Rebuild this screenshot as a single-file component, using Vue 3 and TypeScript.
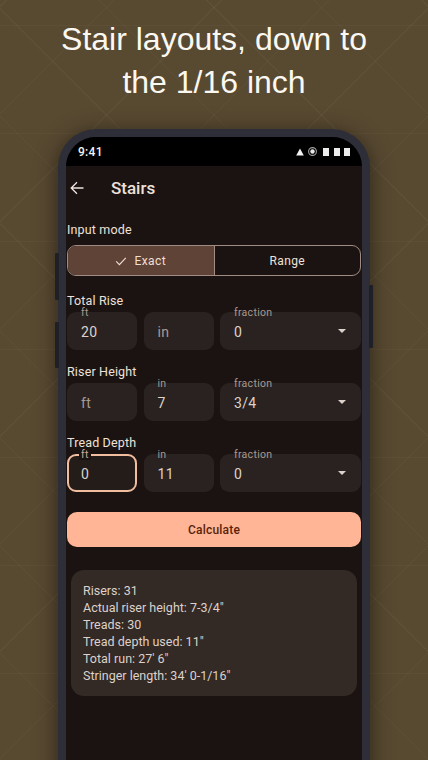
<script setup lang="ts">
interface Field { label: string; value: string; placeholder?: boolean; focused?: boolean }
interface Group { title: string; ft: Field; inch: Field; fraction: string }

const groups: Group[] = [
  { title: 'Total Rise', ft: { label: 'ft', value: '20' }, inch: { label: '', value: 'in', placeholder: true }, fraction: '0' },
  { title: 'Riser Height', ft: { label: '', value: 'ft', placeholder: true }, inch: { label: 'in', value: '7' }, fraction: '3/4' },
  { title: 'Tread Depth', ft: { label: 'ft', value: '0', focused: true }, inch: { label: 'in', value: '11' }, fraction: '0' },
]

const results: string[] = [
  'Risers: 31',
  'Actual riser height: 7-3/4"',
  'Treads: 30',
  'Tread depth used: 11"',
  "Total run: 27' 6\"",
  "Stringer length: 34' 0-1/16\"",
]
</script>

<template>
  <div class="page">
    <h1 class="headline">Stair layouts, down to<br />the 1/16 inch</h1>
    <div class="phone">
      <span class="side side-l1"></span>
      <span class="side side-l2"></span>
      <span class="side side-r"></span>
      <div class="screen">
        <div class="status">
          <span class="time">9:41</span>
          <span class="status-icons">
            <svg width="8" height="8" viewBox="0 0 8 8"><path d="M4 .5 7.8 7.5H.2z" fill="#f2f2f2" /></svg>
            <svg class="dot" width="9" height="9" viewBox="0 0 9 9"><circle cx="4.5" cy="4.5" r="3.9" fill="none" stroke="#a0a0a0" stroke-width="1.1" /><circle cx="4.5" cy="4.5" r="2.2" fill="#e8e8e8" /></svg>
            <i class="cell"></i><i class="cell"></i><i class="cell"></i>
          </span>
        </div>
        <div class="appbar">
          <svg class="back" width="16" height="16" viewBox="0 0 16 16"><path d="M14.5 8H2.2M8 2.2 2.2 8 8 13.8" fill="none" stroke="#ede3dc" stroke-width="1.3" /></svg>
          <span class="title">Stairs</span>
        </div>
        <div class="content">
          <div class="mode-label">Input mode</div>
          <div class="segments">
            <div class="segment active">
              <svg width="12" height="12" viewBox="0 0 12 12"><path d="M1.2 6.4 4.4 9.6 10.8 2.8" fill="none" stroke="#f1dfd5" stroke-width="1.1" /></svg>
              <span>Exact</span>
            </div>
            <div class="segment">Range</div>
          </div>

          <section v-for="g in groups" :key="g.title" class="group">
            <div class="group-title">{{ g.title }}</div>
            <div class="row">
              <div v-for="f in [g.ft, g.inch]" :key="f.value + f.label" class="field" :class="{ focused: f.focused }">
                <span v-if="f.label" class="float">{{ f.label }}</span>
                <span class="value" :class="{ ph: f.placeholder }">{{ f.value }}</span>
              </div>
              <div class="field select">
                <span class="float">fraction</span>
                <span class="value">{{ g.fraction }}</span>
                <svg class="caret" width="8" height="4" viewBox="0 0 8 4"><path d="M0 0h8L4 4z" fill="#dcd2cb" /></svg>
              </div>
            </div>
          </section>

          <button class="calc" type="button">Calculate</button>

          <div class="card">
            <div v-for="r in results" :key="r">{{ r }}</div>
          </div>
        </div>
      </div>
    </div>
  </div>
</template>

<style scoped>
.page {
  width: 428px;
  height: 760px;
  overflow: hidden;
  box-sizing: border-box;
  padding-top: 18px;
  background-color: #584931;
  background-image:
    repeating-linear-gradient(180deg, transparent 0 25px, rgba(255, 240, 210, 0.03) 25px 26px, transparent 26px 108px),
    repeating-linear-gradient(45deg, transparent 0 75px, rgba(255, 240, 210, 0.035) 75px 76px),
    repeating-linear-gradient(-45deg, transparent 0 75px, rgba(255, 240, 210, 0.035) 75px 76px);
  font-family: Roboto, "Liberation Sans", sans-serif;
}
.headline {
  margin: 0;
  font-family: "Liberation Sans", Arial, sans-serif;
  font-weight: 400;
  font-size: 32px;
  line-height: 43px;
  text-align: center;
  color: #fbf8f2;
}
.phone {
  position: relative;
  box-sizing: border-box;
  width: 312px;
  height: 700px;
  margin: 25px 0 0 58px;
  padding: 8px 8px 0;
  border-radius: 38px 38px 0 0;
  background: #2e2e38;
  box-shadow: 0 4px 22px rgba(0, 0, 0, 0.5);
}
.side {
  position: absolute;
  width: 4px;
  border-radius: 1px;
  background: #1f2027;
}
.side-l1 { left: -3px; top: 124px; height: 47px; }
.side-l2 { left: -3px; top: 193px; height: 46px; }
.side-r { right: -3px; top: 156px; height: 63px; }
.screen {
  height: 100%;
  border-radius: 30px 30px 0 0;
  overflow: hidden;
  background: #1b1311;
  color: #ede1da;
}
.status {
  display: flex;
  align-items: center;
  justify-content: space-between;
  height: 29px;
  padding: 0 12px;
  background: #000;
  color: #f2f2f2;
}
.time {
  font-size: 12px;
  font-weight: 500;
  letter-spacing: 0.3px;
}
.status-icons {
  display: flex;
  align-items: center;
  gap: 4.3px;
}
.dot { margin-right: 2px; }
.cell {
  display: block;
  width: 6px;
  height: 8px;
  background: #ececec;
}
.appbar {
  display: flex;
  align-items: center;
  height: 44px;
  padding-left: 3px;
}
.back { margin-right: 26px; }
.title {
  font-size: 17px;
  font-weight: 500;
}
.content { padding: 0 1px; }
.mode-label {
  margin-top: 12px;
  font-size: 12.5px;
  line-height: 16px;
  letter-spacing: 0.15px;
}
.segments {
  display: flex;
  height: 31px;
  margin-top: 7px;
  border: 1px solid #a08c82;
  border-radius: 9px;
  overflow: hidden;
  box-sizing: border-box;
}
.segment {
  flex: 1;
  display: flex;
  align-items: center;
  justify-content: center;
  gap: 7px;
  font-size: 12px;
  letter-spacing: 0.4px;
}
.segment.active {
  background: #5f4337;
  border-right: 1px solid #a08c82;
  color: #f1dfd5;
}
.group { margin-top: 13px; }
.segments + .group { margin-top: 16px; }
.group-title {
  font-size: 12.5px;
  line-height: 17px;
  letter-spacing: 0.15px;
}
.row {
  display: flex;
  gap: 6.5px;
  margin-top: 3px;
}
.field {
  position: relative;
  box-sizing: border-box;
  flex: 0 0 70px;
  height: 38px;
  display: flex;
  align-items: center;
  padding: 0 14px;
  border-radius: 9px;
  background: #2a2220;
  font-size: 14px;
  letter-spacing: 0.3px;
}
.field.focused {
  border: 2px solid #f0bd9f;
  padding: 0 12px;
  background: #241c19;
}
.select { flex: 1 1 auto; }
.float {
  position: absolute;
  left: 14px;
  top: -5px;
  padding: 0 2px;
  margin-left: -2px;
  font-size: 10.5px;
  line-height: 12px;
  color: #a89a91;
}
.focused .float {
  left: 12px;
  top: -6px;
  background: #1b1311;
  color: #c9ab9a;
  line-height: 10px;
}
.value { color: #dcd2cb; margin-top: 1px; }
.value.ph { color: #a89a91; }
.caret {
  position: absolute;
  right: 15px;
  top: 17px;
}
.calc {
  display: block;
  width: 100%;
  height: 35px;
  margin-top: 20px;
  padding: 0;
  border: 0;
  border-radius: 10px;
  background: #ffb596;
  color: #5a1f08;
  font-family: inherit;
  font-size: 12px;
  font-weight: 500;
  letter-spacing: 0.2px;
}
.card {
  margin: 23px 4px 0;
  padding: 12px 12px;
  border-radius: 13px;
  background: #332925;
  color: #dcd2cb;
  font-size: 12.5px;
  line-height: 17px;
}
</style>
